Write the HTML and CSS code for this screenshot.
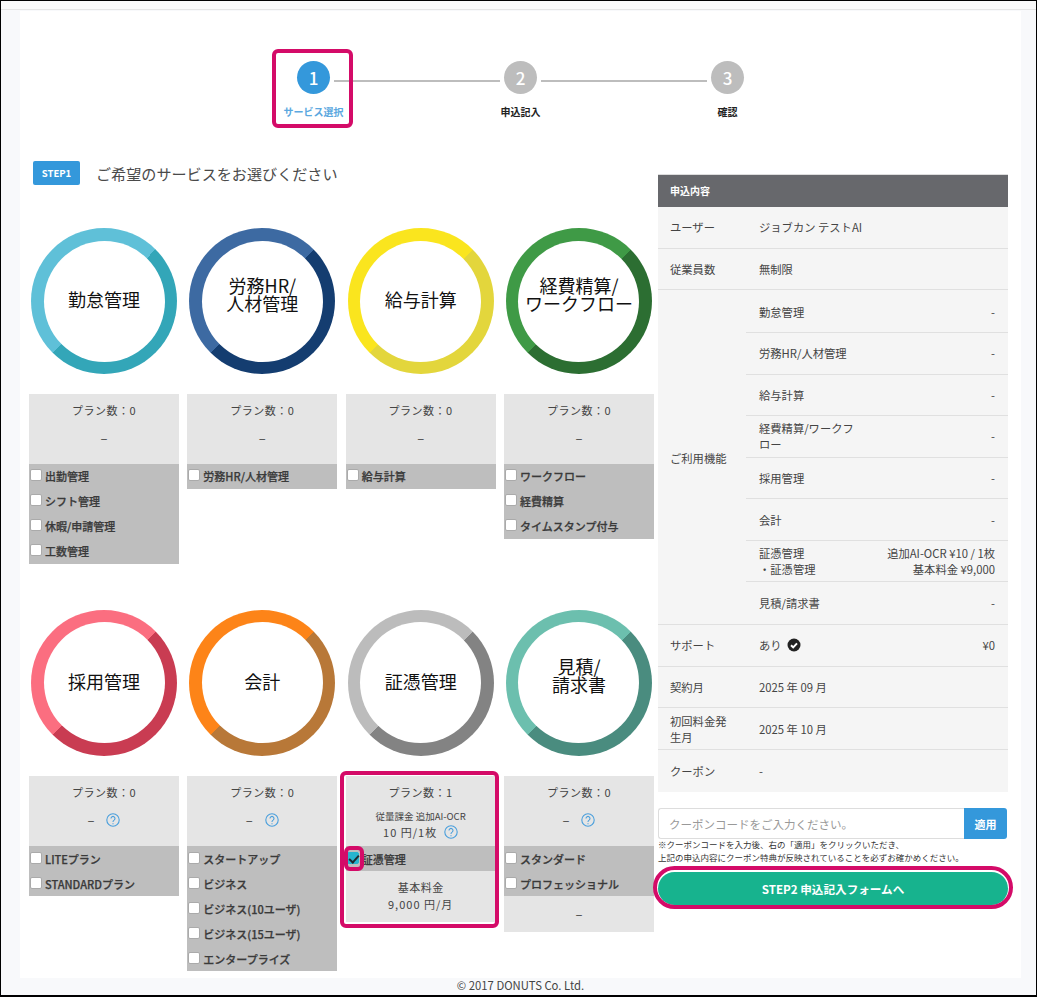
FILE: index.html
```html
<!DOCTYPE html>
<html lang="ja">
<head>
    <meta charset="UTF-8">
    <title>サービス選択</title>
    <link rel="stylesheet" href="styles.css">
</head>
<body>
    <div class="frame">
        <div class="topbar"></div>
        <div class="panel">
            <div class="stepper">
                <div class="step-row">
                    <span class="step-num active">1</span>
                    <span class="step-line"></span>
                    <span class="step-num">2</span>
                    <span class="step-line"></span>
                    <span class="step-num">3</span>
                </div>
                <div class="step-labels">
                    <span class="step-label active">サービス選択</span>
                    <span class="step-label">申込記入</span>
                    <span class="step-label">確認</span>
                </div>
            </div>

            <div class="content">
                <div class="left">
                    <div class="heading">
                        <span class="badge">STEP1</span>
                        <h2>ご希望のサービスをお選びください</h2>
                    </div>
                    <div class="services">
                        <div class="card">
                            <div class="ring ring-attend"><div class="ring-in">勤怠管理</div></div>
                            <div class="plan-head"><p>プラン数：0</p><p class="price">–</p></div>
                            <div class="options">
                                <label><input type="checkbox">出勤管理</label>
                                <label><input type="checkbox">シフト管理</label>
                                <label><input type="checkbox">休暇/申請管理</label>
                                <label><input type="checkbox">工数管理</label>
                            </div>
                        </div>
                        <div class="card">
                            <div class="ring ring-hr"><div class="ring-in two-lines">労務HR/<br>人材管理</div></div>
                            <div class="plan-head"><p>プラン数：0</p><p class="price">–</p></div>
                            <div class="options">
                                <label><input type="checkbox">労務HR/人材管理</label>
                            </div>
                        </div>
                        <div class="card">
                            <div class="ring ring-pay"><div class="ring-in">給与計算</div></div>
                            <div class="plan-head"><p>プラン数：0</p><p class="price">–</p></div>
                            <div class="options">
                                <label><input type="checkbox">給与計算</label>
                            </div>
                        </div>
                        <div class="card">
                            <div class="ring ring-flow"><div class="ring-in two-lines">経費精算/<br>ワークフロー</div></div>
                            <div class="plan-head"><p>プラン数：0</p><p class="price">–</p></div>
                            <div class="options">
                                <label><input type="checkbox">ワークフロー</label>
                                <label><input type="checkbox">経費精算</label>
                                <label><input type="checkbox">タイムスタンプ付与</label>
                            </div>
                        </div>

                        <div class="card">
                            <div class="ring ring-recruit"><div class="ring-in">採用管理</div></div>
                            <div class="plan-head">
                                <p>プラン数：0</p>
                                <p class="price">– <svg class="help" viewBox="0 0 14 14"><circle cx="7" cy="7" r="6.2"/><path d="M5 5.4a2 2 0 1 1 3.1 1.7C7.3 7.6 7 8 7 8.9M7 10.2v1"/></svg></p>
                            </div>
                            <div class="options">
                                <label><input type="checkbox">LITEプラン</label>
                                <label><input type="checkbox">STANDARDプラン</label>
                            </div>
                        </div>
                        <div class="card">
                            <div class="ring ring-account"><div class="ring-in">会計</div></div>
                            <div class="plan-head">
                                <p>プラン数：0</p>
                                <p class="price">– <svg class="help" viewBox="0 0 14 14"><circle cx="7" cy="7" r="6.2"/><path d="M5 5.4a2 2 0 1 1 3.1 1.7C7.3 7.6 7 8 7 8.9M7 10.2v1"/></svg></p>
                            </div>
                            <div class="options">
                                <label><input type="checkbox">スタートアップ</label>
                                <label><input type="checkbox">ビジネス</label>
                                <label><input type="checkbox">ビジネス(10ユーザ)</label>
                                <label><input type="checkbox">ビジネス(15ユーザ)</label>
                                <label><input type="checkbox">エンタープライズ</label>
                            </div>
                        </div>
                        <div class="card">
                            <div class="ring ring-receipt"><div class="ring-in">証憑管理</div></div>
                            <div class="plan-head">
                                <p>プラン数：1</p>
                                <p class="metered">従量課金 追加AI-OCR</p>
                                <p class="metered-price">10 円/1枚 <svg class="help" viewBox="0 0 14 14"><circle cx="7" cy="7" r="6.2"/><path d="M5 5.4a2 2 0 1 1 3.1 1.7C7.3 7.6 7 8 7 8.9M7 10.2v1"/></svg></p>
                            </div>
                            <div class="options">
                                <label><input type="checkbox" checked>証憑管理</label>
                            </div>
                            <div class="plan-foot"><p>基本料金</p><p class="fee">9,000 円/月</p></div>
                        </div>
                        <div class="card">
                            <div class="ring ring-invoice"><div class="ring-in two-lines">見積/<br>請求書</div></div>
                            <div class="plan-head">
                                <p>プラン数：0</p>
                                <p class="price">– <svg class="help" viewBox="0 0 14 14"><circle cx="7" cy="7" r="6.2"/><path d="M5 5.4a2 2 0 1 1 3.1 1.7C7.3 7.6 7 8 7 8.9M7 10.2v1"/></svg></p>
                            </div>
                            <div class="options">
                                <label><input type="checkbox">スタンダード</label>
                                <label><input type="checkbox">プロフェッショナル</label>
                            </div>
                            <div class="plan-foot plan-foot-empty">–</div>
                        </div>
                    </div>
                </div>

                <div class="right">
                    <div class="summary">
                        <div class="summary-head">申込内容</div>
                        <div class="row"><div class="row-label">ユーザー</div><div class="row-val">ジョブカン テストAI</div></div>
                        <div class="row"><div class="row-label">従業員数</div><div class="row-val">無制限</div></div>
                        <div class="group">
                            <div class="row-label">ご利用機能</div>
                            <div class="sub-rows">
                                <div class="sub"><div class="sub-name">勤怠管理</div><div class="sub-price">-</div></div>
                                <div class="sub"><div class="sub-name">労務HR/人材管理</div><div class="sub-price">-</div></div>
                                <div class="sub"><div class="sub-name">給与計算</div><div class="sub-price">-</div></div>
                                <div class="sub"><div class="sub-name">経費精算/ワークフロー</div><div class="sub-price">-</div></div>
                                <div class="sub"><div class="sub-name">採用管理</div><div class="sub-price">-</div></div>
                                <div class="sub"><div class="sub-name">会計</div><div class="sub-price">-</div></div>
                                <div class="sub"><div class="sub-name">証憑管理<br>・証憑管理</div><div class="sub-price">追加AI-OCR ¥10 / 1枚<br>基本料金 ¥9,000</div></div>
                                <div class="sub"><div class="sub-name">見積/請求書</div><div class="sub-price">-</div></div>
                            </div>
                        </div>
                        <div class="row">
                            <div class="row-label">サポート</div>
                            <div class="row-val">あり <svg class="ok" viewBox="0 0 14 14"><circle cx="7" cy="7" r="6.5"/><path d="M4 7.2l2.2 2.2L10 5.4"/></svg></div>
                            <div class="sub-price">¥0</div>
                        </div>
                        <div class="row"><div class="row-label">契約月</div><div class="row-val">2025 年 09 月</div></div>
                        <div class="row"><div class="row-label">初回料金発生月</div><div class="row-val">2025 年 10 月</div></div>
                        <div class="row row-last"><div class="row-label">クーポン</div><div class="row-val">-</div></div>
                    </div>

                    <div class="coupon">
                        <input type="text" placeholder="クーポンコードをご入力ください。">
                        <button type="button">適用</button>
                    </div>
                    <p class="note">※クーポンコードを入力後、右の「適用」をクリックいただき、<br>上記の申込内容にクーポン特典が反映されていることを必ずお確かめください。</p>
                    <button type="button" class="next">STEP2 申込記入フォームへ</button>
                </div>
            </div>
        </div>
        <div class="footer">© 2017 DONUTS Co. Ltd.</div>

        <div class="mark mark-step"></div>
        <div class="mark mark-card"></div>
        <div class="mark mark-check"></div>
        <div class="mark mark-next"></div>
    </div>
</body>
</html>
```

FILE: styles.css
```css
* { box-sizing: border-box; }
html, body { margin: 0; padding: 0; }
body { font-family: "Noto Sans CJK JP", "Noto Sans", sans-serif; color: #444; font-size: 11px; }
p, h2 { margin: 0; }

.frame { position: relative; width: 1037px; height: 997px; background: #f8f9fb; border: 1px solid #000; border-bottom-width: 2px; overflow: hidden; }
.topbar { height: 9px; background: #f9f9f9; border-bottom: 1px solid #e4e4e4; }
.panel { width: 1001px; height: 967px; margin: 1px 0 0 19px; background: #fff; padding-top: 50px; }
.footer { padding-left: 4px; font-size: 11.3px; text-align: center; line-height: 14px; color: #444; }

/* stepper */
.stepper { width: 447px; margin: 0 auto; }
.step-row { display: flex; align-items: center; }
.step-num { flex: none; width: 33px; height: 33px; border-radius: 50%; background: #bdbdbd; color: #fff; font-size: 17px; font-weight: 500; line-height: 33px; text-align: center; }
.step-num.active { background: #3498db; }
.step-line { flex: 1; height: 2px; margin: 6px 4px 0; background: #bdbdbd; }
.step-labels { display: flex; justify-content: space-between; margin-top: 11px; }
.step-label { display: flex; justify-content: center; width: 33px; font-size: 10px; font-weight: 700; line-height: 14px; white-space: nowrap; color: #222; }
.step-label.active { color: #5ba8e0; }

.content { display: flex; gap: 4px; margin: 42px 0 0 9px; }
.left { width: 625px; }
.right { width: 350px; padding-top: 13px; }

.heading { display: flex; align-items: center; margin: 0 0 43px 4px; }
.badge { width: 47px; height: 24px; border-radius: 2px; background: #3498db; color: #fff; font-size: 9.5px; font-weight: 700; line-height: 24px; text-align: center; }
h2 { margin-left: 16px; font-size: 15.1px; font-weight: 400; color: #4a4a4a; }

/* service cards */
.services { display: grid; grid-template-columns: repeat(4, 1fr); gap: 46px 8.33px; align-items: start; }
.ring { width: 146px; height: 146px; margin: 0 auto 19.5px; padding: 12.5px; border-radius: 50%; }
.card:nth-child(n+5) .ring { margin-bottom: 20.5px; }
.ring-in { display: flex; align-items: center; justify-content: center; height: 100%; padding-bottom: 4px; border-radius: 50%; background: #fff; color: #111; font-size: 18px; line-height: 18px; text-align: center; }
.ring-in.two-lines { padding-bottom: 15px; }
.ring-attend { background: conic-gradient(from 45deg, #33a6b8 0 180deg, #5fc0d8 180deg 360deg); }
.ring-hr { background: conic-gradient(from 45deg, #143d70 0 180deg, #3d6aa2 180deg 360deg); }
.ring-pay { background: conic-gradient(from 45deg, #e3d63c 0 180deg, #fae51e 180deg 360deg); }
.ring-flow { background: conic-gradient(from 45deg, #2c6e32 0 180deg, #3f9a46 180deg 360deg); }
.ring-recruit { background: conic-gradient(from 45deg, #c93c52 0 180deg, #fb6e80 180deg 360deg); }
.ring-account { background: conic-gradient(from 45deg, #b87838 0 180deg, #fd8418 180deg 360deg); }
.ring-receipt { background: conic-gradient(from 45deg, #838383 0 180deg, #bcbcbc 180deg 360deg); }
.ring-invoice { background: conic-gradient(from 45deg, #4a8c7f 0 180deg, #6cbfae 180deg 360deg); }

.plan-head { height: 70px; padding-top: 8px; background: #e5e5e5; text-align: center; font-size: 11px; line-height: 16px; letter-spacing: 0.5px; }
.price { display: flex; align-items: center; justify-content: center; gap: 12px; height: 16px; margin-top: 12px; font-size: 13px; letter-spacing: 0; }
.metered { margin-top: 9px; font-size: 9.5px; line-height: 14px; letter-spacing: 0; }
.metered-price { display: flex; align-items: center; justify-content: center; gap: 7px; line-height: 16px; letter-spacing: 1px; margin-top: 1px; }
.help { width: 14px; height: 14px; fill: none; stroke: #4a9fdc; stroke-width: 1.1; }

.options { background: #bebebe; }
.options label { display: flex; align-items: center; height: 25px; padding-left: 1px; font-weight: 500; color: #3a3a3a; -webkit-text-stroke: 0.25px #3a3a3a; }
.options input { appearance: none; position: relative; width: 12px; height: 12px; margin: 0 3px 2px 0; flex: none; border: 1px solid #aaa; border-radius: 2px; background: #fff; }
.options input:checked { background: #26b5cf; border-color: #26b5cf; }
.options input:checked::after { content: ""; position: absolute; left: 3px; top: 0; width: 4px; height: 8px; border: solid #1d2b30; border-width: 0 2px 2px 0; transform: rotate(42deg); }

.plan-foot { height: 51px; padding-top: 8px; background: #e5e5e5; text-align: center; line-height: 17px; letter-spacing: 0.5px; }
.fee { letter-spacing: 1px; }
.plan-foot-empty { height: 36px; padding-top: 9px; font-size: 13px; letter-spacing: 0; }

/* summary */
.summary { background: #f5f5f5; font-size: 11.3px; }
.summary-head { height: 33px; padding-left: 12px; background: #67686c; border-top: 1px solid #ddd; color: #fff; font-size: 10px; font-weight: 700; line-height: 31px; }
.row { display: flex; align-items: center; height: 41.67px; border-bottom: 1px solid #e0e0e0; line-height: 16px; }
.row-last { height: 42px; border-bottom: 0; }
.row-label { flex: none; width: 88px; padding: 0 14px 0 12px; }
.row-val { flex: 1; display: flex; align-items: center; gap: 3px; padding-left: 13px; white-space: pre-wrap; }
.ok { width: 14px; height: 14px; margin-bottom: 1px; }
.ok circle { fill: #222; }
.ok path { fill: none; stroke: #fff; stroke-width: 2; }
.group { display: flex; align-items: center; padding-top: 1px; border-bottom: 1px solid #e0e0e0; }
.sub-rows { flex: 1; }
.sub { display: flex; align-items: center; height: 41.6px; padding-left: 13px; border-bottom: 1px solid #e0e0e0; line-height: 16px; }
.sub:last-child { border-bottom: 0; }
.sub-name { flex: none; width: 100px; }
.sub-price { flex: 1; padding-right: 13px; text-align: right; }

.coupon { display: flex; margin-top: 16px; }
.coupon input { width: 306px; height: 31px; padding: 0 10px; border: 1px solid #ddd; border-right: 0; border-radius: 3px 0 0 3px; outline: 0; font: 11.5px "Noto Sans CJK JP", sans-serif; }
.coupon input::placeholder { color: #999; }
.coupon button { width: 43px; height: 31px; padding: 0; border: 0; border-radius: 0 3px 3px 0; background: #3498db; color: #fff; font: 700 11px "Noto Sans CJK JP", sans-serif; }
.note { margin-top: -1px; font-size: 8.5px; line-height: 13px; color: #333; white-space: nowrap; }
.next { display: block; width: 350px; height: 33px; margin-top: 8px; padding: 0; border: 0; border-radius: 17px; background: #17b38e; color: #fff; font: 700 11.6px "Noto Sans CJK JP", sans-serif; }

/* red annotation frames over the page */
.mark { position: absolute; border: 4px solid #d40b68; border-radius: 6px; pointer-events: none; }
.mark-step { left: 271px; top: 48px; width: 81px; height: 79px; }
.mark-card { left: 339px; top: 770px; width: 159px; height: 157px; }
.mark-check { left: 343px; top: 845px; width: 20px; height: 25px; }
.mark-next { left: 652px; top: 865px; width: 360px; height: 43px; border-radius: 22px; }
```
